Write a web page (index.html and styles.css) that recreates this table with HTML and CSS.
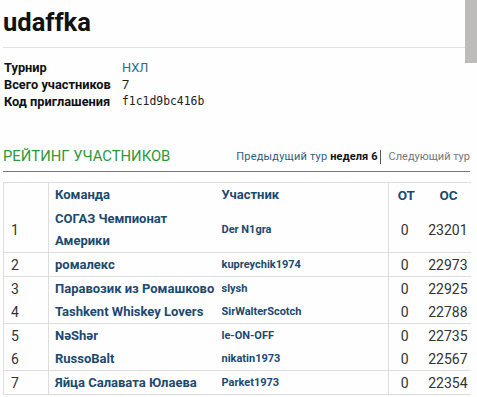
FILE: index.html
```html
<!DOCTYPE html>
<html lang="ru">
<head>
<meta charset="utf-8">
<link rel="stylesheet" href="styles.css">
</head>
<body>
<div class="page">
  <h1 class="title">udaffka</h1>
  <div class="rule"></div>
  <dl class="info">
    <dt>Турнир</dt><dd><a class="link">НХЛ</a></dd>
    <dt>Всего участников</dt><dd>7</dd>
    <dt>Код приглашения</dt><dd class="code">f1c1d9bc416b</dd>
  </dl>
  <div class="section-head">
    <h2 class="section-title">РЕЙТИНГ УЧАСТНИКОВ</h2>
    <div class="tour-nav">
      <a class="prev">Предыдущий тур</a>
      <b class="current">неделя 6</b><span class="sep"></span>
      <span class="next">Следующий тур</span>
    </div>
  </div>
  <table class="rating">
    <colgroup>
      <col class="c-rank"><col class="c-team"><col class="c-user"><col class="c-ot"><col class="c-os">
    </colgroup>
    <thead>
      <tr><th class="rank"></th><th class="team">Команда</th><th class="user">Участник</th><th class="ot">ОТ</th><th class="os">ОС</th></tr>
    </thead>
    <tbody>
      <tr class="tall line"><td class="rank">1</td><td class="team">СОГАЗ Чемпионат<br>Америки</td><td class="user">Der N1gra</td><td class="ot">0</td><td class="os">23201</td></tr>
      <tr class="line"><td class="rank">2</td><td class="team">ромалекс</td><td class="user">kupreychik1974</td><td class="ot">0</td><td class="os">22973</td></tr>
      <tr><td class="rank">3</td><td class="team">Паравозик из Ромашково</td><td class="user">slysh</td><td class="ot">0</td><td class="os">22925</td></tr>
      <tr class="line"><td class="rank">4</td><td class="team">Tashkent Whiskey Lovers</td><td class="user">SirWalterScotch</td><td class="ot">0</td><td class="os">22788</td></tr>
      <tr><td class="rank">5</td><td class="team">NəShər</td><td class="user">le-ON-OFF</td><td class="ot">0</td><td class="os">22735</td></tr>
      <tr class="line"><td class="rank">6</td><td class="team">RussoBalt</td><td class="user">nikatin1973</td><td class="ot">0</td><td class="os">22567</td></tr>
      <tr class="line"><td class="rank">7</td><td class="team">Яйца Салавата Юлаева</td><td class="user">Parket1973</td><td class="ot">0</td><td class="os">22354</td></tr>
    </tbody>
  </table>
</div>
<div class="scroll-thumb"></div>
</body>
</html>
```

FILE: styles.css
```css
html, body {
  margin: 0;
  padding: 0;
  background: #fefefe;
}
body {
  font-family: Roboto, "Noto Sans", sans-serif;
  color: #222;
  overflow: hidden;
}
.page {
  padding: 0 7px 0 3px;
}
.title {
  margin: 7px 0 0 0;
  font-size: 25.5px;
  line-height: 30px;
  font-weight: 700;
  color: #111;
}
.rule {
  margin-top: 10px;
  border-top: 1px solid #e4e4e4;
}
.info {
  margin: 11px 0 0 0;
  display: grid;
  grid-template-columns: 119px auto;
  font-size: 12.8px;
  line-height: 17px;
}
.info dt {
  font-weight: 700;
  color: #111;
  padding-left: 1px;
}
.info dd {
  margin: 0;
  color: #222;
}
.link {
  color: #2c6b91;
}
.code {
  font-family: "DejaVu Sans Mono", monospace;
  font-size: 11.4px;
}
.section-head {
  margin-top: 36px;
  display: flex;
  justify-content: space-between;
  align-items: flex-end;
  border-bottom: 1px solid #777;
  padding-bottom: 5px;
}
.section-title {
  margin: 0;
  font-size: 14.8px;
  line-height: 20px;
  font-weight: 400;
  color: #2a9a3a;
}
.tour-nav {
  display: flex;
  align-items: center;
  font-size: 11px;
  line-height: 16px;
  padding-bottom: 1px;
}
.prev {
  color: #2b5e83;
  margin-right: 3px;
  letter-spacing: 0.2px;
}
.current {
  color: #111;
  letter-spacing: 0.1px;
}
.sep {
  display: inline-block;
  width: 1px;
  height: 14px;
  background: #555;
  margin: 0 8px 0 2px;
}
.next {
  color: #777;
}
.rating {
  margin-top: 10px;
  width: 467px;
  border-collapse: collapse;
  table-layout: fixed;
  border-top: 1px solid #ddd;
  border-left: 1px solid #ddd;
  font-size: 13px;
}
.c-rank { width: 45px; }
.c-team { width: 166px; }
.c-user { width: 174px; }
.c-ot { width: 32px; }
.c-os { width: 50px; }
.rating th, .rating td {
  padding: 0;
  height: 23px;
  line-height: 22px;
  vertical-align: middle;
  text-align: left;
}
.rating th {
  height: 24px;
  color: #1b4a70;
  font-weight: 700;
}
.rating tr.tall td { height: 45px; }
.rating tr.line td { border-bottom: 1px solid #ddd; }
.rating .rank {
  border-right: 1px solid #ddd;
  padding-left: 7px;
  color: #333;
  font-size: 14px;
}
.rating .team {
  padding-left: 6px;
  color: #1b4a70;
  font-weight: 700;
  white-space: nowrap;
}
.rating .user {
  padding-left: 7px;
  border-right: 1px solid #ddd;
  color: #1b4a70;
  font-weight: 700;
  font-size: 11px;
}
.rating th.user { font-size: 13px; }
.rating .ot {
  text-align: center;
  color: #333;
  font-size: 14px;
}
.rating .os {
  text-align: right;
  padding-right: 3px;
  color: #333;
  font-size: 14px;
}
.rating th.ot, .rating th.os {
  font-size: 13.5px;
  color: #1b4a70;
}
.rating th.ot {
  text-align: center;
  padding-left: 3px;
}
.rating th.os {
  text-align: center;
  padding-left: 6px;
  padding-right: 0;
}
.scroll-thumb {
  position: fixed;
  top: 0;
  right: 0;
  width: 12px;
  height: 63px;
  background: #bdbcbb;
}
```
